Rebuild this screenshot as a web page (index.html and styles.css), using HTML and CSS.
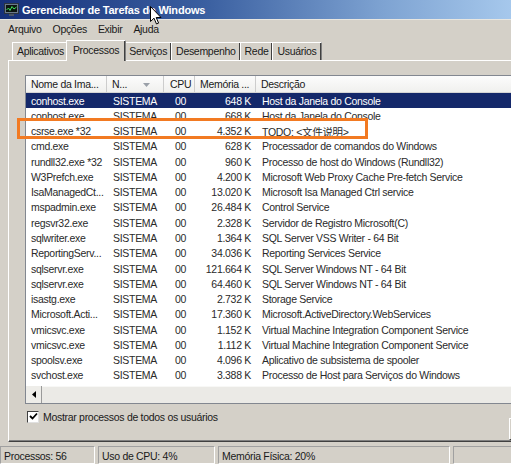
FILE: index.html
```html
<!DOCTYPE html>
<html lang="pt-BR">
<head>
  <meta charset="UTF-8">
  <title>Gerenciador de Tarefas do Windows</title>
  <link rel="stylesheet" href="styles.css">
</head>
<body>
  <div class="window">
    <!-- Title bar -->
    <div class="titlebar">
      <svg class="app-icon" width="15" height="15" viewBox="0 0 15 15">
        <rect x="0.5" y="1.5" width="14" height="10" fill="#6c7a8c" stroke="#2b3440"/>
        <rect x="2" y="3" width="11" height="7" fill="#0c1410"/>
        <polyline points="2.5,8 4.5,6 6,8.5 8,4.5 10,7 12.5,5" fill="none" stroke="#3fe05a" stroke-width="1"/>
        <rect x="5" y="12" width="5" height="2" fill="#4a5566"/>
      </svg>
      <span class="title">Gerenciador de Tarefas do Windows</span>
    </div>

    <!-- Menu -->
    <div class="menubar">
      <span>Arquivo</span>
      <span>Opções</span>
      <span>Exibir</span>
      <span>Ajuda</span>
    </div>

    <div class="main">
      <!-- Tabs -->
      <div class="tabs">
        <div class="tab">Aplicativos</div>
        <div class="tab active">Processos</div>
        <div class="tab">Serviços</div>
        <div class="tab">Desempenho</div>
        <div class="tab">Rede</div>
        <div class="tab">Usuários</div>
      </div>

      <div class="panel">
        <div class="listview">
          <div class="lv-head">
            <div class="hcell">Nome da Ima...</div>
            <div class="hcell sorted">N...
              <svg width="7" height="4" viewBox="0 0 7 4"><path d="M0 0 L7 0 L3.5 4 Z" fill="#9aa0a8"/></svg>
            </div>
            <div class="hcell">CPU</div>
            <div class="hcell">Memória ...</div>
            <div class="hcell">Descrição</div>
          </div>

          <div class="lv-rows" id="rows"></div>

          <div class="hscroll">
            <div class="sb-btn">
              <svg width="4" height="7" viewBox="0 0 4 7"><path d="M4 0 L4 7 L0 3.5 Z" fill="#000"/></svg>
            </div>
            <div class="sb-track"></div>
          </div>
        </div>

        <label class="check">
          <span class="box">
            <svg width="9" height="9" viewBox="0 0 9 9"><path d="M1 4 L3.5 6.5 L8 1.5" fill="none" stroke="#000" stroke-width="1.8"/></svg>
          </span>
          Mostrar processos de todos os usuários
        </label>

        <div class="end-btn"></div>
      </div>
    </div>

    <!-- Status bar -->
    <div class="statusbar">
      <div class="sb-panel p1">Processos: 56</div>
      <div class="sb-panel p2">Uso de CPU: 4%</div>
      <div class="sb-panel p3">Memória Física: 20%</div>
      <div class="sb-panel p4"></div>
    </div>

    <!-- annotation and pointer drawn over the screen -->
    <div class="mark"></div>
    <svg class="cursor" width="12" height="19" viewBox="0 0 12 19">
      <path d="M0.5 0.5 L0.5 15.5 L4 12.2 L6.5 18 L8.6 17.1 L6.2 11.5 L11 11.5 Z" fill="#fff" stroke="#000" stroke-width="1"/>
    </svg>
  </div>

  <script>
    var procs = [
      ['conhost.exe', '00', '648 K', 'Host da Janela do Console'],
      ['conhost.exe', '00', '668 K', 'Host da Janela do Console'],
      ['csrse.exe *32', '00', '4.352 K', 'TODO: <文件说明>'],
      ['cmd.exe', '00', '628 K', 'Processador de comandos do Windows'],
      ['rundll32.exe *32', '00', '960 K', 'Processo de host do Windows (Rundll32)'],
      ['W3Prefch.exe', '00', '4.200 K', 'Microsoft Web Proxy Cache Pre-fetch Service'],
      ['IsaManagedCt...', '00', '13.020 K', 'Microsoft Isa Managed Ctrl service'],
      ['mspadmin.exe', '00', '26.484 K', 'Control Service'],
      ['regsvr32.exe', '00', '2.328 K', 'Servidor de Registro Microsoft(C)'],
      ['sqlwriter.exe', '00', '1.364 K', 'SQL Server VSS Writer - 64 Bit'],
      ['ReportingServ...', '00', '34.036 K', 'Reporting Services Service'],
      ['sqlservr.exe', '00', '121.664 K', 'SQL Server Windows NT - 64 Bit'],
      ['sqlservr.exe', '00', '64.460 K', 'SQL Server Windows NT - 64 Bit'],
      ['isastg.exe', '00', '2.732 K', 'Storage Service'],
      ['Microsoft.Acti...', '00', '17.360 K', 'Microsoft.ActiveDirectory.WebServices'],
      ['vmicsvc.exe', '00', '1.152 K', 'Virtual Machine Integration Component Service'],
      ['vmicsvc.exe', '00', '1.112 K', 'Virtual Machine Integration Component Service'],
      ['spoolsv.exe', '00', '4.096 K', 'Aplicativo de subsistema de spooler'],
      ['svchost.exe', '00', '3.388 K', 'Processo de Host para Serviços do Windows']
    ];

    var rows = document.getElementById('rows');
    procs.forEach(function (p, i) {
      var row = document.createElement('div');
      row.className = 'row' + (i === 0 ? ' selected' : '');
      var cells = [p[0], 'SISTEMA', p[1], p[2], p[3]];
      cells.forEach(function (text, c) {
        var cell = document.createElement('div');
        cell.className = 'cell c' + c;
        cell.textContent = text;
        row.appendChild(cell);
      });
      rows.appendChild(row);
    });
  </script>
</body>
</html>
```

FILE: styles.css
```css
/* Base */
* {
  box-sizing: border-box;
  margin: 0;
  padding: 0;
}

html, body {
  width: 511px;
  height: 464px;
  overflow: hidden;
  background: #d4d0c8;
  font-family: 'Liberation Sans', Arial, 'Noto Sans CJK SC', sans-serif;
  font-size: 10.5px;
  letter-spacing: -0.3px;
  color: #1a1a1a;
}

/* The window is larger than the visible crop; clip it here */
.window {
  position: relative;
  width: 511px;
  height: 464px;
  overflow: hidden;
  display: flex;
  flex-direction: column;
}

/* Title bar */
.titlebar {
  height: 20px;
  display: flex;
  align-items: center;
  gap: 3px;
  padding-left: 4px;
  background: linear-gradient(to right, #16307a 0%, #3a5fa0 40%, #7ea3d2 75%, #a6c8ec 100%);
  border-bottom: 1px solid #e8e6e0;
}

.title {
  color: #fff;
  font-weight: 700;
  font-size: 11px;
  letter-spacing: -0.2px;
}

/* Menu */
.menubar {
  height: 17px;
  display: flex;
  align-items: center;
  padding-left: 8px;
  gap: 11px;
}

/* Tabs + page */
.main {
  width: 580px;
  padding: 3px 0 0 8px;
}

.tabs {
  height: 20px;
  display: flex;
  align-items: flex-end;
  padding-left: 4px;
}

.tab {
  height: 18px;
  padding: 2px 4px 0;
  border: 1px solid #fff;
  border-right-color: #808080;
  border-bottom: none;
  box-shadow: inset -1px 0 #404040;
  margin-right: -1px;
}

.tab.active {
  height: 21px;
  margin: 0 -2px -1px -2px;
  padding: 3px 6px 0;
  background: #d4d0c8;
  position: relative;
  z-index: 1;
}

.panel {
  height: 382px;
  border: 1px solid #fff;
  border-right-color: #808080;
  border-bottom: 1px solid #404040;
  box-shadow: inset 0 -1px #808080;
  padding: 14px 0 0 16px;
  display: flex;
  flex-direction: column;
  position: relative;
}

/* List view */
.listview {
  background: #fff;
  border: 1px solid #828790;
}

.lv-head,
.row {
  display: grid;
  grid-template-columns: 81px 57px 31px 61px 1fr;
}

.lv-head {
  height: 17px;
  background: linear-gradient(#fcfcfc, #f0f0ee);
  border-bottom: 1px solid #d5d5d5;
}

.hcell {
  padding: 2px 0 0 5px;
  border-right: 1px solid #cdcdcd;
  white-space: nowrap;
  overflow: hidden;
}

.hcell:nth-child(3) {
  padding-left: 6px;
}

.hcell:last-child {
  border-right: none;
}

.hcell.sorted {
  display: flex;
  align-items: flex-start;
  gap: 16px;
}

.hcell.sorted svg {
  margin-top: 5px;
}

.lv-rows {
  height: 293px;
  display: grid;
  grid-auto-rows: 15.28px;
  align-content: start;
  overflow: hidden;
}

.row {
  align-items: center;
  color: #2a2a2a;
}

.row.selected {
  background: #14286a;
  color: #fff;
}

.cell {
  white-space: nowrap;
  overflow: hidden;
  padding-left: 5px;
}

.cell.c1 {
  padding-left: 6px;
}

.cell.c2 {
  padding-left: 11px;
}

.cell.c3 {
  text-align: right;
  padding-right: 5px;
}

.cell.c4 {
  padding-left: 6px;
}

/* Horizontal scrollbar */
.hscroll {
  height: 17px;
  display: flex;
  background: #ebeae6;
}

.sb-btn {
  width: 16px;
  display: flex;
  align-items: center;
  justify-content: center;
  background: #eeede9;
  border-right: 1px solid #9a9a9a;
}

.sb-track {
  flex: 1;
  border-top: 1px solid #f8f8f6;
}

/* Checkbox */
.check {
  margin: 6px 0 0 2px;
  display: flex;
  align-items: center;
  gap: 4px;
  height: 13px;
}

.box {
  width: 12px;
  height: 12px;
  background: #fff;
  border: 1px solid #404040;
  border-right-color: #e0e0e0;
  border-bottom-color: #e0e0e0;
  display: flex;
  align-items: center;
  justify-content: center;
}

.end-btn {
  position: absolute;
  left: 500px;
  top: 357px;
  width: 70px;
  height: 22px;
  border: 1px solid #fff;
  border-right-color: #404040;
  border-bottom-color: #404040;
}

/* Status bar */
.statusbar {
  margin-top: 4px;
  height: 18px;
  display: flex;
  gap: 3px;
}

.sb-panel {
  flex: none;
  height: 18px;
  padding: 3px 0 0 3px;
  border: 1px solid #a0a0a0;
  border-right-color: #fff;
  border-bottom-color: #fff;
}

.p1 { width: 95px; }
.p2 { width: 117px; }
.p3 { width: 232px; }
.p4 { width: 100px; }

/* Overlays */
.mark {
  position: absolute;
  left: 17px;
  top: 118px;
  width: 351px;
  height: 21px;
  border: 3px solid #f27a22;
}

.cursor {
  position: absolute;
  left: 150px;
  top: 6px;
}
```
